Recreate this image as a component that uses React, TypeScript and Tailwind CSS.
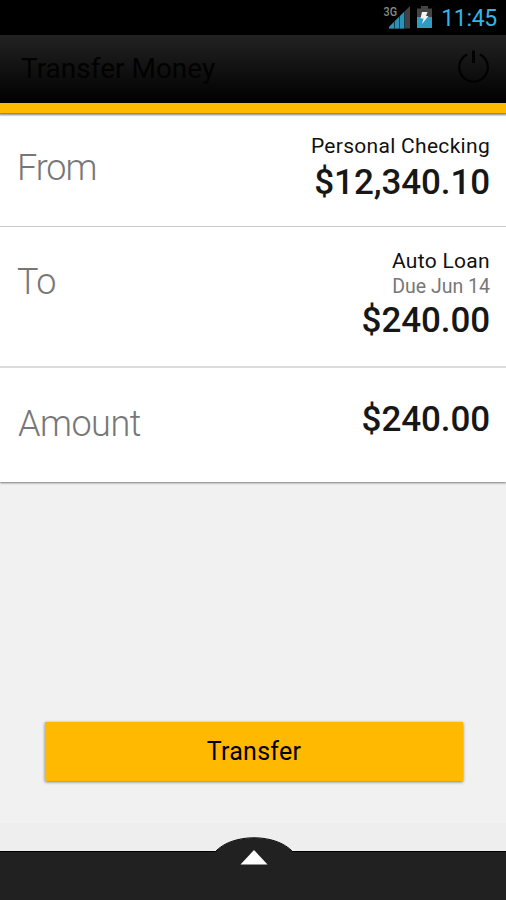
import type { ReactNode } from "react";

interface TransferRowProps {
  label: string;
  className: string;
  labelClass: string;
  children: ReactNode;
}

const StatusBar = () => {
  return (
    <div className="flex h-[35px] items-start justify-end bg-black pr-[9px]">
      <svg width="28" height="24" viewBox="0 0 28 24" className="mt-[5px]">
        <text
          x="0.5"
          y="11"
          fontSize="12.5"
          fontWeight="500"
          fill="#8a8a8a"
          textLength="13.5"
          lengthAdjust="spacingAndGlyphs"
        >
          3G
        </text>
        <path d="M27 1V23.5H6V22Z" fill="#424242" />
        <path d="M21.5 6.5V23.5H6V22Z" fill="#2b93b8" />
        <path d="M11.5 16V24M16.5 11V24M21.5 6V24" stroke="#123d4d" strokeWidth="1" />
      </svg>
      <svg width="15" height="22" viewBox="0 0 15 22" className="mt-[6px] ml-[6px]">
        <path d="M0 2.5H4V0H11V2.5H15V11H0Z" fill="#444444" />
        <path d="M0 11H15V22H0Z" fill="#2f9bc0" />
        <path d="M5 6H10.5L9 10H11.5L5 18L6.5 12.5H3.5Z" fill="#f4f4f4" />
      </svg>
      <span className="mt-[5px] ml-[9px] text-[23px] leading-[28px] tracking-[-0.3px] text-[#33b5e5]">
        11:45
      </span>
    </div>
  );
};

const Header = () => {
  return (
    <div className="relative z-10 border-b-[10px] border-[#ffb900] bg-linear-to-b/srgb from-[#222222] to-black shadow-[0_1px_2px_1px_rgba(0,0,0,0.5)]">
      <div className="flex h-[68px] items-start justify-between pr-[16px] pl-[21px]">
        <h1 className="mt-[14px] text-[28px] leading-[40px] text-[#020202]">
          Transfer Money
        </h1>
        <svg
          width="33"
          height="34"
          viewBox="0 0 33 34"
          fill="none"
          stroke="#020202"
          className="mt-[15px]"
        >
          <path d="M10.2 4.5A14.3 14.3 0 1 0 22.8 4.5" strokeWidth="2.2" />
          <path d="M16.5 0.5V13" strokeWidth="3" />
        </svg>
      </div>
    </div>
  );
};

const TransferRow = ({ label, className, labelClass, children }: TransferRowProps) => {
  return (
    <div className={`flex items-start justify-between pr-[16px] ${className}`}>
      <span className={`text-[36px] leading-[40px] font-light text-[#777777] ${labelClass}`}>
        {label}
      </span>
      <div className="flex flex-col items-end">{children}</div>
    </div>
  );
};

const Amount = ({ children }: { children: ReactNode }) => {
  return (
    <span className="text-[35px] leading-[40px] font-medium tracking-[-0.1px] text-[#171717]">
      {children}
    </span>
  );
};

export default function App() {
  return (
    <div className="flex h-[900px] w-[506px] flex-col overflow-hidden bg-[#f1f1f1] font-['Roboto',sans-serif]">
      <StatusBar />
      <Header />

      <div className="bg-white shadow-[0_1px_2px_rgba(0,0,0,0.5)]">
        <TransferRow
          label="From"
          className="h-[114px] border-b border-[#c8c8c8] pt-[20px] pl-[17px]"
          labelClass="mt-[15px] tracking-[-1.1px]"
        >
          <span className="mb-[4px] text-[21px] leading-[26px] tracking-[0.3px] text-[#111111]">
            Personal Checking
          </span>
          <Amount>$12,340.10</Amount>
        </TransferRow>
        <TransferRow
          label="To"
          className="h-[141px] border-b-2 border-[#dcdcdc] pt-[21px] pl-[17px]"
          labelClass="mt-[14px] tracking-[-0.5px]"
        >
          <span className="text-[21px] leading-[26px] tracking-[0.3px] text-[#111111]">
            Auto Loan
          </span>
          <span className="mb-[1px] text-[19.5px] leading-[26px] text-[#777777]">
            Due Jun 14
          </span>
          <Amount>$240.00</Amount>
        </TransferRow>
        <TransferRow
          label="Amount"
          className="h-[114px] pt-[32px] pl-[18px]"
          labelClass="mt-[4px] tracking-[-0.5px]"
        >
          <Amount>$240.00</Amount>
        </TransferRow>
      </div>

      <div className="flex flex-1 flex-col items-end justify-end pr-[43px] pb-[42px]">
        <button className="h-[59px] w-[418px] bg-[#ffb900] text-[25px] leading-[59px] tracking-[0.25px] text-black shadow-[0_1px_3px_rgba(0,0,0,0.5)]">
          Transfer
        </button>
      </div>

      <div className="h-[28px] bg-[#eeeeee]" />
      <div className="relative h-[49px] border-t border-black bg-[#212121]">
        <svg
          width="80"
          height="30"
          viewBox="0 0 80 30"
          className="absolute -top-[15px] left-[214px]"
        >
          <path d="M0 16C18 -4 62 -4 80 16Z" fill="#212121" />
          <path d="M1 15C18 -4 62 -4 79 15" fill="none" stroke="#0a0a0a" />
          <path d="M26.5 27.5L40 13L53.5 27.5Z" fill="#ffffff" />
        </svg>
      </div>
    </div>
  );
}
